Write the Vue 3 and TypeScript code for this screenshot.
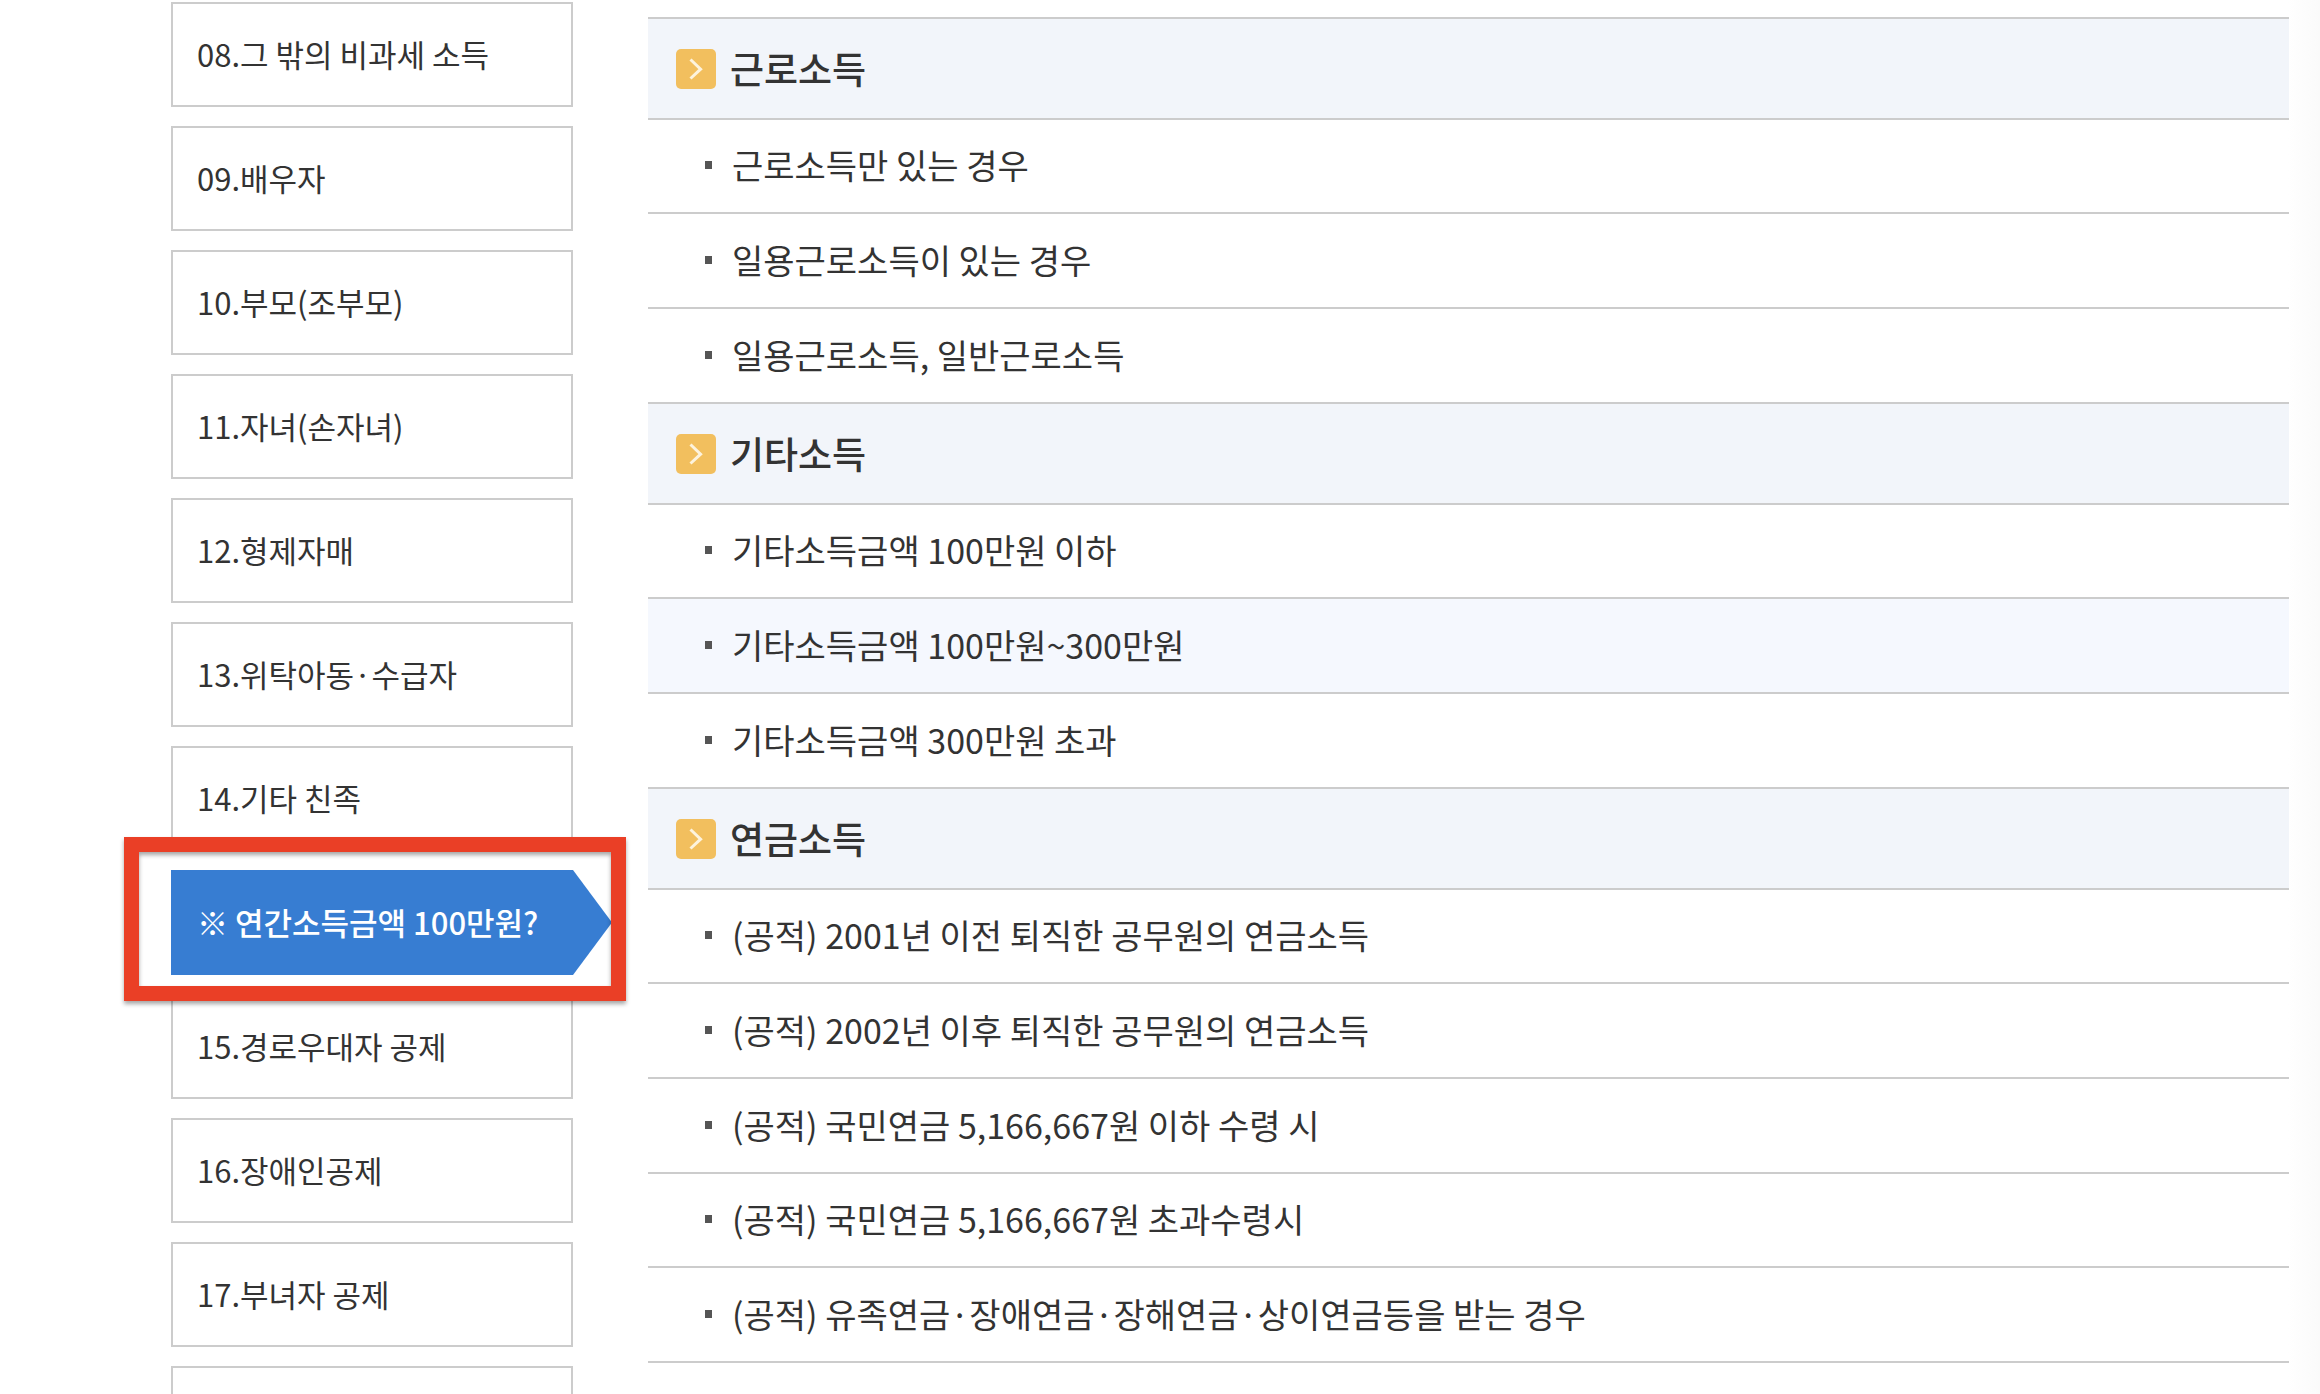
<script setup lang="ts">
interface MenuItem {
  label: string
  active?: boolean
}

interface Row {
  text: string
  highlighted?: boolean
}

interface Section {
  title: string
  rows: Row[]
}

const menu: MenuItem[] = [
  { label: '08.그 밖의 비과세 소득' },
  { label: '09.배우자' },
  { label: '10.부모(조부모)' },
  { label: '11.자녀(손자녀)' },
  { label: '12.형제자매' },
  { label: '13.위탁아동·수급자' },
  { label: '14.기타 친족' },
  { label: '※ 연간소득금액 100만원?', active: true },
  { label: '15.경로우대자 공제' },
  { label: '16.장애인공제' },
  { label: '17.부녀자 공제' },
  { label: '' },
]

const sections: Section[] = [
  {
    title: '근로소득',
    rows: [
      { text: '근로소득만 있는 경우' },
      { text: '일용근로소득이 있는 경우' },
      { text: '일용근로소득, 일반근로소득' },
    ],
  },
  {
    title: '기타소득',
    rows: [
      { text: '기타소득금액 100만원 이하' },
      { text: '기타소득금액 100만원~300만원', highlighted: true },
      { text: '기타소득금액 300만원 초과' },
    ],
  },
  {
    title: '연금소득',
    rows: [
      { text: '(공적) 2001년 이전 퇴직한 공무원의 연금소득' },
      { text: '(공적) 2002년 이후 퇴직한 공무원의 연금소득' },
      { text: '(공적) 국민연금 5,166,667원 이하 수령 시' },
      { text: '(공적) 국민연금 5,166,667원 초과수령시' },
      { text: '(공적) 유족연금·장애연금·장해연금·상이연금등을 받는 경우' },
    ],
  },
]
</script>

<template>
  <div class="page">
    <nav class="menu">
      <div v-for="(item, i) in menu" :key="i" class="menu-item" :class="{ active: item.active }">
        <a href="#" class="menu-link">{{ item.label }}</a>
        <span v-if="item.active" class="marker"></span>
      </div>
    </nav>

    <main class="content">
      <section v-for="section in sections" :key="section.title">
        <h2 class="title">
          <svg class="title-icon" viewBox="0 0 40 40" aria-hidden="true">
            <rect width="40" height="40" rx="5" fill="#f2bf5e" />
            <path d="M14.5 10.5 L24.6 20.2 L14.5 29.5" fill="none" stroke="#fdf3dd" stroke-width="3" />
          </svg>
          <span class="title-text">{{ section.title }}</span>
        </h2>
        <ul class="rows">
          <li v-for="row in section.rows" :key="row.text" class="row" :class="{ highlighted: row.highlighted }">
            <a href="#" class="row-link">{{ row.text }}</a>
          </li>
        </ul>
      </section>
    </main>
  </div>
</template>

<style>
body {
  margin: 0;
  background: #fff;
}
</style>

<style scoped>
.page {
  box-sizing: border-box;
  display: flex;
  align-items: flex-start;
  gap: 75px;
  height: 100vh;
  padding: 2px 31px 0 171px;
  overflow: hidden;
  color: #333;
  background: linear-gradient(to left, #fafafa, #fff 32px);
  font-family: "Noto Sans CJK KR", "Noto Sans", sans-serif;
}

a {
  color: inherit;
  text-decoration: none;
}

.menu {
  display: flex;
  flex: 0 0 402px;
  flex-direction: column;
  gap: 19px;
}

.menu-item {
  position: relative;
}

.menu-link {
  display: block;
  box-sizing: border-box;
  height: 105px;
  padding: 0 24px;
  border: 2px solid #ccc;
  background: #fff;
  font-size: 31px;
  line-height: 100px;
  white-space: nowrap;
}

.active {
  z-index: 1;
}

/* White band between the marker and the active link */
.active::before {
  content: "";
  position: absolute;
  inset: -33px -53px -26px -47px;
  background: #fff;
}

.active .menu-link {
  position: relative;
  padding: 0 26px;
  border: 0;
  background: #377dd2;
  color: #fff;
  font-weight: 500;
  line-height: 104px;
}

.active .menu-link::after {
  content: "";
  position: absolute;
  top: 0;
  left: 100%;
  width: 39px;
  height: 100%;
  background: #377dd2;
  clip-path: polygon(0 0, 100% 50%, 0 100%);
}

.marker {
  position: absolute;
  inset: -33px -53px -26px -47px;
  border: 15px solid #ea3f26;
  filter: drop-shadow(0 3px 2px rgba(0, 0, 0, 0.35));
  pointer-events: none;
}

.content {
  flex: 1;
  min-width: 0;
  padding-top: 15px;
}

.content section:first-child .title {
  border-top: 2px solid #ccc;
}

.title {
  display: flex;
  align-items: center;
  gap: 14px;
  height: 99px;
  margin: 0;
  padding-left: 28px;
  border-bottom: 2px solid #ccc;
  background: #f2f5fa;
  font-size: 37px;
  font-weight: 500;
}

.title-icon {
  width: 40px;
  height: 40px;
}

.title-text {
  padding-bottom: 2px;
}

.rows {
  margin: 0;
  padding: 0;
  list-style: none;
}

.row {
  padding-bottom: 2px;
  border-bottom: 2px solid #ccc;
  line-height: 91px;
}

.row:nth-child(3n + 1) {
  line-height: 90px;
}

.highlighted {
  background: #f5f8fe;
}

.row-link {
  display: flex;
  align-items: center;
  gap: 20px;
  padding-left: 57px;
  font-size: 34px;
  white-space: nowrap;
}

.row-link::before {
  content: "";
  width: 7px;
  height: 8px;
  background: #555;
}
</style>
